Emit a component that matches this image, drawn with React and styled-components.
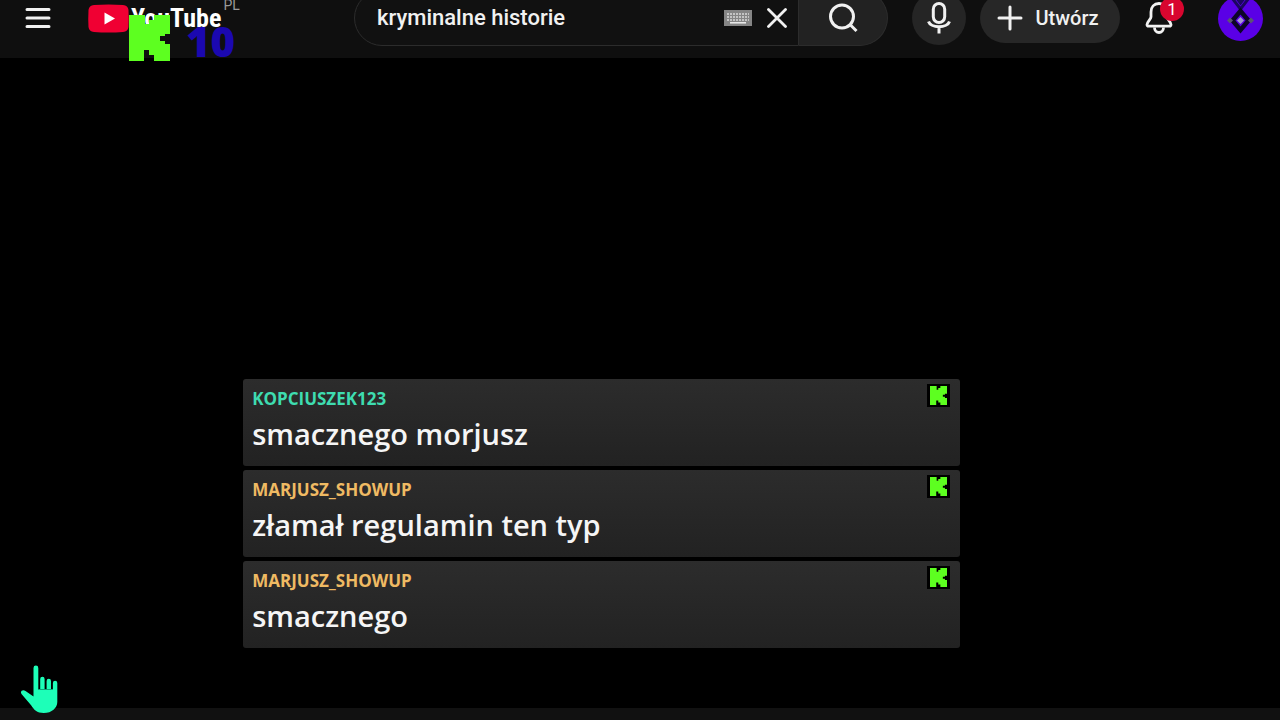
import React, { useState } from 'react'
import styled, { createGlobalStyle } from 'styled-components'

const GlobalStyle = createGlobalStyle`
* {
box-sizing: border-box;
}
body {
margin: 0;
background-color: #000;
overflow: hidden;
}
button {
padding: 0;
border: none;
background: none;
cursor: pointer;
}
svg {
display: block;
}
`
const Page = styled.div`
min-height: 100vh;
display: flex;
flex-direction: column;
color: white;
font-family: Roboto, "Liberation Sans", sans-serif;
`
const Masthead = styled.header`
position: relative;
display: flex;
align-items: center;
height: 80px;
margin-top: -22px;
padding: 0 17px 0 25px;
background-color: #0f0f0f;
`
const Brand = styled.div`
flex: 0 0 329px;
display: flex;
align-items: center;
gap: 37px;
`
const LogoLink = styled.a`
display: flex;
align-items: center;
gap: 2px;
color: white;
text-decoration: none;
`
const Wordmark = styled.span`
font-family: "Liberation Sans Narrow", "Roboto Condensed", Roboto, sans-serif;
font-weight: 700;
font-size: 26px;
line-height: 30px;
`
const Country = styled.span`
align-self: flex-start;
margin-top: -6px;
font-size: 14px;
line-height: 16px;
color: #9a9a9a;
`
const SearchForm = styled.form`
flex: 1;
display: flex;
height: 56px;
`
const SearchBox = styled.div`
flex: 1;
min-width: 0;
display: flex;
align-items: center;
gap: 15px;
padding: 0 11px 0 22px;
background-color: #111;
border: 1px solid #2c2c2c;
border-radius: 28px 0 0 28px;
`
const SearchInput = styled.input`
flex: 1;
min-width: 0;
padding: 0;
border: none;
outline: none;
background: none;
color: #f1f1f1;
font-family: inherit;
font-weight: 500;
font-size: 22px;
line-height: 28px;
`
const SearchButton = styled.button`
width: 89px;
display: flex;
align-items: center;
justify-content: center;
background-color: #222;
border: 1px solid #2c2c2c;
border-left: none;
border-radius: 0 28px 28px 0;
`
const Actions = styled.div`
display: flex;
align-items: center;
`
const MicButton = styled.button`
display: flex;
align-items: center;
justify-content: center;
width: 54px;
height: 54px;
margin-left: 24px;
border-radius: 50%;
background-color: #252525;
`
const CreateButton = styled.button`
display: flex;
align-items: center;
justify-content: center;
gap: 12px;
width: 140px;
height: 50px;
margin: 0 25px 0 14px;
padding-right: 4px;
border-radius: 25px;
background-color: #272727;
color: #f1f1f1;
font-family: inherit;
font-weight: 500;
font-size: 20px;
`
const BellButton = styled.button`
position: relative;
margin-right: 45px;
`
const Badge = styled.span`
position: absolute;
top: -5px;
right: -11px;
width: 24px;
height: 24px;
border-radius: 50%;
background-color: #d8062f;
color: white;
font-family: Roboto, sans-serif;
font-size: 17px;
line-height: 24px;
text-align: center;
`
const Counter = styled.div`
position: absolute;
left: 129px;
top: 37px;
display: flex;
align-items: flex-start;
gap: 16px;
color: #1b08b0;
font-family: "Open Sans", sans-serif;
font-weight: 800;
font-size: 42px;
line-height: 52px;
`
const Main = styled.main`
flex: 1;
display: flex;
flex-direction: column;
justify-content: flex-end;
padding-bottom: 60px;
`
const ChatList = styled.ul`
display: flex;
flex-direction: column;
gap: 4px;
width: 56%;
margin: 0 0 0 19%;
padding: 0;
list-style: none;
font-family: "Open Sans", "Noto Sans", sans-serif;
`
const ChatItem = styled.li`
display: flex;
justify-content: space-between;
align-items: flex-start;
padding: 5px 10px 12px 9px;
border-radius: 3px;
background: linear-gradient(#2c2c2c, #222);
`
const Author = styled.div`
color: ${(props) => props.$color};
font-weight: 700;
font-size: 17px;
line-height: 30px;
text-transform: uppercase;
`
const Message = styled.div`
color: #f5f5f5;
font-weight: 600;
font-size: 29px;
line-height: 40px;
`
const KickBadge = styled.span`
padding: 2px 3px;
background-color: #000;
`
const BottomBar = styled.footer`
height: 12px;
background-color: #111;
`
const Pointer = styled.svg`
position: absolute;
left: 20px;
bottom: 6px;
`

const messages = [
    { id: 1, author: "kopciuszek123", color: "#3edcb0", text: "smacznego morjusz" },
    { id: 2, author: "marjusz_showup", color: "#efba63", text: "złamał regulamin ten typ" },
    { id: 3, author: "marjusz_showup", color: "#efba63", text: "smacznego" },
]

const KickIcon = ({ width, height }) => (
    <svg width={width} height={height} viewBox="0 0 41 46" preserveAspectRatio="none" aria-hidden="true">
        <path fill="#5dff20" d="M0 0h16v9h4V5h5V0h16v19h-5v2h-5v5h5v3h5v17H25v-6h-5v-5h-5v11H0z" />
    </svg>
)

const KeyboardIcon = () => (
    <svg width="28" height="16" viewBox="0 0 28 16" aria-hidden="true">
        <rect width="28" height="16" fill="#858585" />
        <path stroke="#c4c4c4" strokeWidth="2" strokeDasharray="2 1" d="M3 4h22M3 7h22M3 10h22" />
        <path stroke="#eee" strokeWidth="1.5" d="M6 12.8h16" />
    </svg>
)

const App = () => {

    const [query, setQuery] = useState("kryminalne historie")

    const search = (e) => {
        e.preventDefault()
    }

    return (
        <>
            <GlobalStyle />
            <Page>
                <Masthead>
                    <Brand>
                        <button type="button" aria-label="Menu">
                            <svg width="26" height="22" fill="none" stroke="#f1f1f1" strokeWidth="3" strokeLinecap="round">
                                <path d="M2 2.5h22M2 11h22M2 19.5h22" />
                            </svg>
                        </button>
                        <LogoLink href="#">
                            <svg width="41" height="29" viewBox="0 0 41 29" aria-hidden="true">
                                <path fill="#f00033" d="M6 1Q20.5 0 35 1Q40 1.3 40.5 6Q41 14.5 40.5 23Q40 27.7 35 28Q20.5 29 6 28Q1 27.7 .5 23Q0 14.5 .5 6Q1 1.3 6 1z" />
                                <path fill="white" d="M16.5 8.5v12l10.5-6z" />
                            </svg>
                            <Wordmark>YouTube</Wordmark>
                            <Country>PL</Country>
                        </LogoLink>
                    </Brand>
                    <SearchForm onSubmit={search}>
                        <SearchBox>
                            <SearchInput aria-label="Szukaj" name="query" value={query} onChange={(e) => setQuery(e.target.value)} />
                            <button type="button" aria-label="Klawiatura">
                                <KeyboardIcon />
                            </button>
                            <button type="button" aria-label="Wyczyść" onClick={() => setQuery("")}>
                                <svg width="20" height="20" fill="none" stroke="#f1f1f1" strokeWidth="2.8" strokeLinecap="round">
                                    <path d="M1.5 1.5l17 17M18.5 1.5l-17 17" />
                                </svg>
                            </button>
                        </SearchBox>
                        <SearchButton type="submit" aria-label="Szukaj">
                            <svg width="30" height="30" fill="none" stroke="#f1f1f1" strokeWidth="3">
                                <circle cx="14" cy="13.5" r="11.5" />
                                <path d="M22 21.5l6.5 6.5" />
                            </svg>
                        </SearchButton>
                    </SearchForm>
                    <Actions>
                        <MicButton type="button" aria-label="Mikrofon">
                            <svg width="24" height="32" fill="none" stroke="#f1f1f1" strokeWidth="3">
                                <rect x="6.3" y="1.5" width="11.4" height="19" rx="5.7" />
                                <path d="M1.5 19.5a10.7 6.5 0 0 0 21 0M12 25.5v6" />
                            </svg>
                        </MicButton>
                        <CreateButton type="button">
                            <svg width="26" height="26" fill="none" stroke="#f1f1f1" strokeWidth="3" strokeLinecap="round" aria-hidden="true">
                                <path d="M13 2v22M2 13h22" />
                            </svg>
                            Utwórz
                        </CreateButton>
                        <BellButton type="button" aria-label="Powiadomienia">
                            <svg width="28" height="32" fill="none" stroke="#f1f1f1" strokeWidth="2.8" strokeLinejoin="round">
                                <path d="M14 1.5c-5 0-8 3.500-8 8.500v5c0 2-4 5-4 7.500 0 1.200.6 1.700 1.700 1.700h20.600c1.100 0 1.700-.5 1.700-1.700 0-2.500-4-5.500-4-7.500v-5c0-5-3-8.500-8-8.500z" />
                                <path d="M9.500 25.500a4.500 5 0 0 0 9 0" />
                            </svg>
                            <Badge>1</Badge>
                        </BellButton>
                        <button type="button" aria-label="Konto">
                            <svg width="45" height="45" viewBox="0 0 45 45">
                                <circle cx="22.5" cy="22.5" r="22.5" fill="#5a00e6" />
                                <path fill="none" stroke="#1c0660" strokeWidth="3" d="M14 2l8.500 11L31 2M18 1l4.500 6L27 1" />
                                <path fill="none" stroke="#0d0528" strokeWidth="4.5" d="M22.500 15l-8 9.500 8 9.500 8-9.500z" />
                                <path fill="#5b5573" d="M9 24.500l3-3 3 3-3 3zM30 24.500l3-3 3 3-3 3z" />
                                <path fill="#a69bd0" d="M19 24.500l3.500-3.500 3.500 3.500-3.500 3.500z" />
                            </svg>
                        </button>
                    </Actions>
                    <Counter>
                        <KickIcon width={41} height={46} />
                        <span>10</span>
                    </Counter>
                </Masthead>

                <Main>
                    <ChatList>
                        {messages.map((m) => (
                            <ChatItem key={m.id}>
                                <div>
                                    <Author $color={m.color}>{m.author}</Author>
                                    <Message>{m.text}</Message>
                                </div>
                                <KickBadge>
                                    <KickIcon width={17} height={19} />
                                </KickBadge>
                            </ChatItem>
                        ))}
                    </ChatList>
                </Main>
                <BottomBar />
                <Pointer width="39" height="49" viewBox="0 0 39 49" aria-hidden="true">
                    <path fill="#1dffb8" d="M13.500 3a2.400 2.400 0 0 1 4.800 0v21h1.900V14a2.200 2.200 0 0 1 4.400 0v10h2V16a2.200 2.200 0 0 1 4.400 0v8h1.900V18a2.200 2.200 0 0 1 4.400 0v19c0 6-5.500 11-13.500 11-7 0-10-3.500-12.500-7.500L1.500 29c-1.800-3 1.500-5 4-3l8 5.500z" />
                    <path stroke="#0aa878" strokeWidth="1" d="M18 24.500h15" />
                </Pointer>
            </Page>
        </>
    )
}

export default App
